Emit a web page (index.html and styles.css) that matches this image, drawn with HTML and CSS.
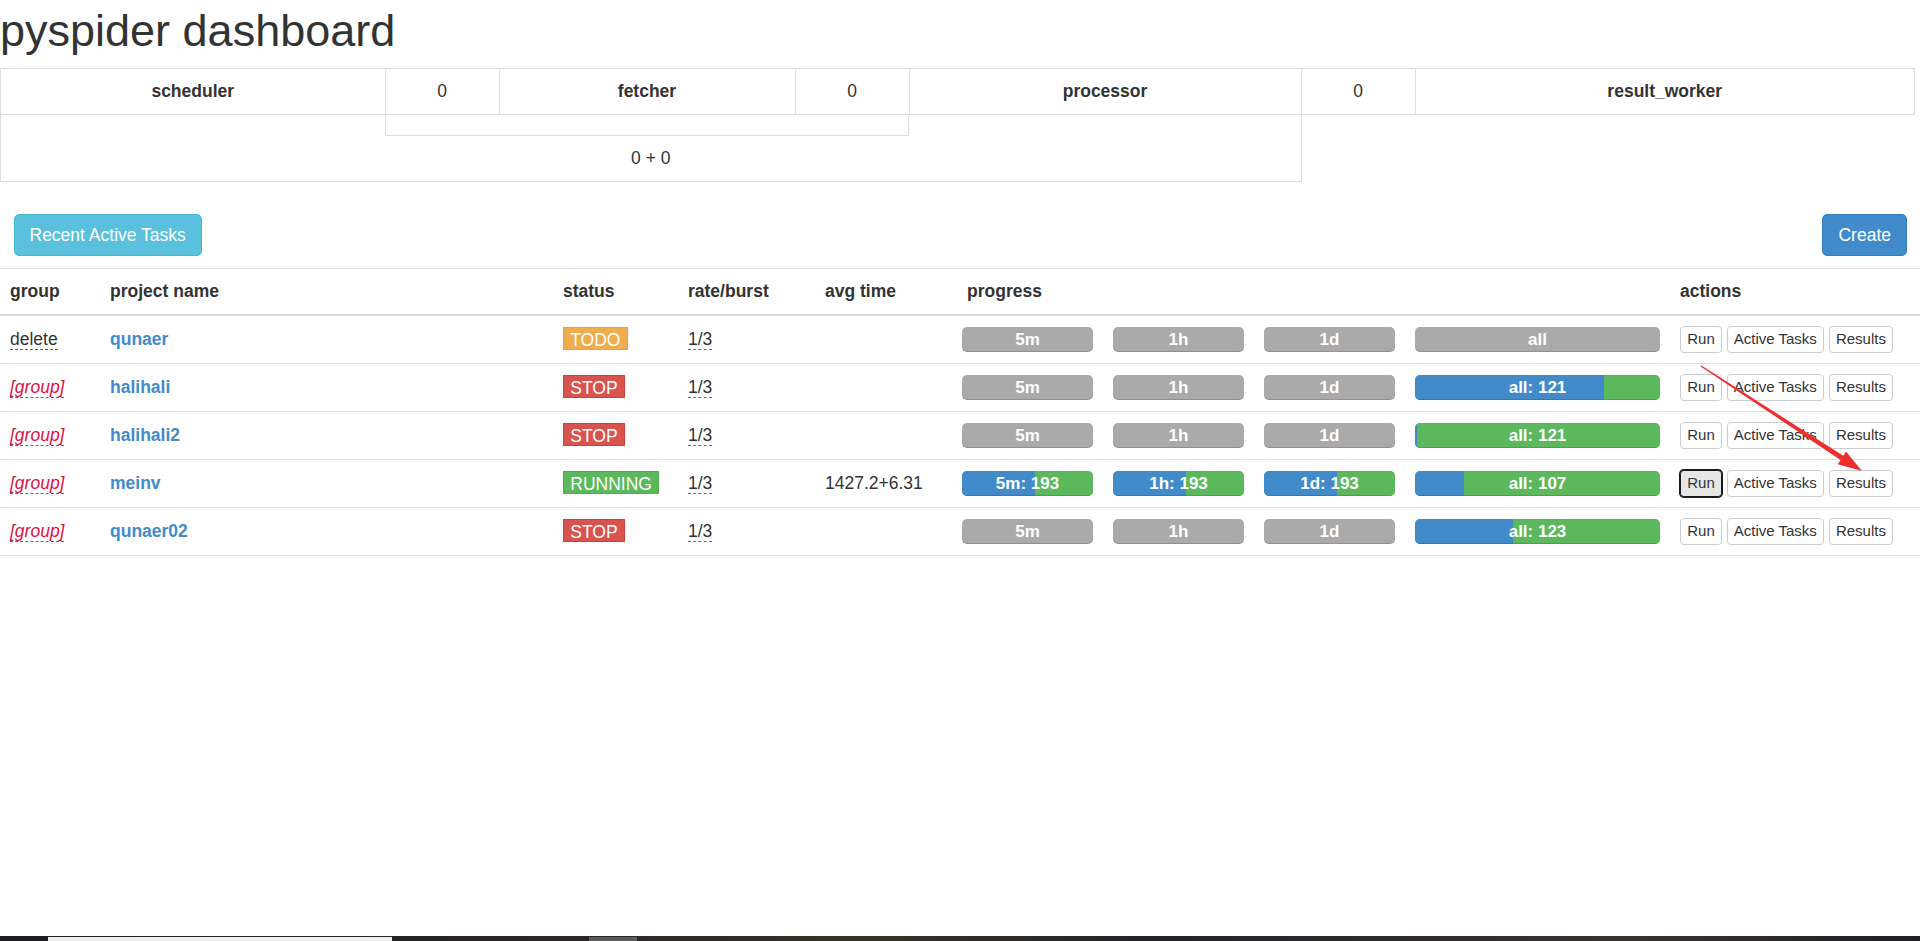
FILE: index.html
```html
<!DOCTYPE html>
<html>
<head>
<meta charset="utf-8">
<title>pyspider dashboard</title>
<link rel="stylesheet" href="styles.css">
</head>
<body>
<div class="page">
  <header><h1>pyspider dashboard</h1></header>

  <section class="queue-info">
    <table class="qtable">
      <colgroup>
        <col class="q-sched"><col class="q-val"><col class="q-fetch"><col class="q-val"><col class="q-proc"><col class="q-val"><col class="q-result">
      </colgroup>
      <tr>
        <th>scheduler</th><td>0</td><th>fetcher</th><td>0</td><th>processor</th><td>0</td><th>result_worker</th>
      </tr>
      <tr>
        <td colspan="5" class="q-bottom"><div class="q-box"></div><div class="q-sum">0 + 0</div></td>
      </tr>
    </table>
  </section>

  <div class="toolbar">
    <button class="btn btn-info">Recent Active Tasks</button>
    <button class="btn btn-primary">Create</button>
  </div>

  <table class="projects">
    <colgroup>
      <col class="p-group"><col class="p-name"><col class="p-status"><col class="p-rate"><col class="p-time"><col class="p-progress"><col class="p-actions">
    </colgroup>
    <thead>
      <tr><th>group</th><th>project name</th><th>status</th><th>rate/burst</th><th>avg time</th><th>progress</th><th>actions</th></tr>
    </thead>
    <tbody>
      <tr>
        <td><span class="editable">delete</span></td>
        <td><span class="project-name">qunaer</span></td>
        <td><span class="status status-todo">TODO</span></td>
        <td><span class="editable">1/3</span></td>
        <td></td>
        <td class="progress-cell"><div class="bars">
          <div class="bar"><div class="bar-text">5m</div></div>
          <div class="bar"><div class="bar-text">1h</div></div>
          <div class="bar"><div class="bar-text">1d</div></div>
          <div class="bar"><div class="bar-text">all</div></div>
        </div></td>
        <td><div class="actions"><button class="btn-xs">Run</button><button class="btn-xs">Active Tasks</button><button class="btn-xs">Results</button></div></td>
      </tr>
      <tr>
        <td><span class="editable editable-empty">[group]</span></td>
        <td><span class="project-name">halihali</span></td>
        <td><span class="status status-stop">STOP</span></td>
        <td><span class="editable">1/3</span></td>
        <td></td>
        <td class="progress-cell"><div class="bars">
          <div class="bar"><div class="bar-text">5m</div></div>
          <div class="bar"><div class="bar-text">1h</div></div>
          <div class="bar"><div class="bar-text">1d</div></div>
          <div class="bar"><div class="bar-fill"><div class="seg-blue" style="width:77%"></div><div class="seg-green"></div></div><div class="bar-text">all: 121</div></div>
        </div></td>
        <td><div class="actions"><button class="btn-xs">Run</button><button class="btn-xs">Active Tasks</button><button class="btn-xs">Results</button></div></td>
      </tr>
      <tr>
        <td><span class="editable editable-empty">[group]</span></td>
        <td><span class="project-name">halihali2</span></td>
        <td><span class="status status-stop">STOP</span></td>
        <td><span class="editable">1/3</span></td>
        <td></td>
        <td class="progress-cell"><div class="bars">
          <div class="bar"><div class="bar-text">5m</div></div>
          <div class="bar"><div class="bar-text">1h</div></div>
          <div class="bar"><div class="bar-text">1d</div></div>
          <div class="bar"><div class="bar-fill"><div class="seg-blue" style="width:1%"></div><div class="seg-green"></div></div><div class="bar-text">all: 121</div></div>
        </div></td>
        <td><div class="actions"><button class="btn-xs">Run</button><button class="btn-xs">Active Tasks</button><button class="btn-xs">Results</button></div></td>
      </tr>
      <tr>
        <td><span class="editable editable-empty">[group]</span></td>
        <td><span class="project-name">meinv</span></td>
        <td><span class="status status-running">RUNNING</span></td>
        <td><span class="editable">1/3</span></td>
        <td>1427.2+6.31</td>
        <td class="progress-cell"><div class="bars">
          <div class="bar"><div class="bar-fill"><div class="seg-blue" style="width:56%"></div><div class="seg-green"></div></div><div class="bar-text">5m: 193</div></div>
          <div class="bar"><div class="bar-fill"><div class="seg-blue" style="width:56%"></div><div class="seg-green"></div></div><div class="bar-text">1h: 193</div></div>
          <div class="bar"><div class="bar-fill"><div class="seg-blue" style="width:56%"></div><div class="seg-green"></div></div><div class="bar-text">1d: 193</div></div>
          <div class="bar"><div class="bar-fill"><div class="seg-blue" style="width:20%"></div><div class="seg-green"></div></div><div class="bar-text">all: 107</div></div>
        </div></td>
        <td><div class="actions"><button class="btn-xs btn-focus">Run</button><button class="btn-xs">Active Tasks</button><button class="btn-xs">Results</button></div></td>
      </tr>
      <tr>
        <td><span class="editable editable-empty">[group]</span></td>
        <td><span class="project-name">qunaer02</span></td>
        <td><span class="status status-stop">STOP</span></td>
        <td><span class="editable">1/3</span></td>
        <td></td>
        <td class="progress-cell"><div class="bars">
          <div class="bar"><div class="bar-text">5m</div></div>
          <div class="bar"><div class="bar-text">1h</div></div>
          <div class="bar"><div class="bar-text">1d</div></div>
          <div class="bar"><div class="bar-fill"><div class="seg-blue" style="width:40%"></div><div class="seg-green"></div></div><div class="bar-text">all: 123</div></div>
        </div></td>
        <td><div class="actions"><button class="btn-xs">Run</button><button class="btn-xs">Active Tasks</button><button class="btn-xs">Results</button></div></td>
      </tr>
    </tbody>
  </table>
</div>

<div class="taskbar"><div class="tb-app"></div><div class="tb-gap"></div><div class="tb-block"></div></div>

<svg class="arrow" width="175" height="115" viewBox="0 0 175 115">
  <polygon points="6.4,3.4 148.3,93.8 151,89.6 167,109 142.8,102.2 145.5,98 5.6,4.6" fill="#ee2f2f"/>
</svg>
</body>
</html>
```

FILE: styles.css
```css
* { box-sizing: border-box; }
html, body { margin: 0; padding: 0; }
body {
  font-family: "Liberation Sans", Arial, sans-serif;
  font-size: 17.5px;
  line-height: 1.42857;
  color: #333;
  background: #fff;
  min-height: 100vh;
  display: flex;
  flex-direction: column;
  position: relative;
}
.page { flex: 1 0 auto; }

h1 {
  font-size: 45px;
  font-weight: 500;
  line-height: 1.1;
  margin: 6px 0 12.5px;
}

/* queue info */
.qtable {
  width: 1914px;
  table-layout: fixed;
  border-collapse: collapse;
  margin-bottom: 25px;
}
.qtable th, .qtable td {
  border: 1px solid #ddd;
  padding: 10px;
  text-align: center;
  vertical-align: top;
  line-height: 25px;
}
.qtable th { font-weight: bold; }
.q-sched { width: 384.5px; }
.q-val { width: 114px; }
.q-fetch { width: 296px; }
.q-proc { width: 392px; }
.q-result { width: 499.5px; }
.qtable td.q-bottom { padding: 0; }
.q-box {
  margin-left: 384px;
  width: 524px;
  height: 21px;
  border: 1px solid #ddd;
  border-top: 0;
}
.q-sum { padding: 10px; }

/* toolbar */
.toolbar {
  display: flex;
  justify-content: space-between;
  padding: 7px 13px 12px 13.5px;
}
.btn {
  font-family: inherit;
  font-size: 17.5px;
  line-height: 25px;
  padding: 7.5px 15px;
  border: 1px solid transparent;
  border-radius: 5px;
  color: #fff;
  cursor: pointer;
}
.btn-info { background: #5bc0de; border-color: #46b8da; }
.btn-primary { background: #428bca; border-color: #357ebd; }

/* projects */
.projects {
  width: 100%;
  table-layout: fixed;
  border-collapse: collapse;
  border-top: 1px solid #ddd;
  border-bottom: 1px solid #ddd;
}
.p-group { width: 100px; }
.p-name { width: 453px; }
.p-status { width: 125px; }
.p-rate { width: 137px; }
.p-time { width: 142px; }
.p-progress { width: 713px; }
.p-actions { width: 250px; }
.projects th {
  text-align: left;
  padding: 10px;
  line-height: 25px;
  font-weight: bold;
  border-bottom: 2px solid #ddd;
}
.projects td {
  padding: 10px;
  line-height: 25px;
  vertical-align: middle;
  border-top: 1px solid #ddd;
  white-space: nowrap;
}
.projects td.progress-cell { padding-left: 5px; }

.editable { border-bottom: 1px dashed #0088cc; }
.editable-empty { color: #dd1144; font-style: italic; }
.project-name { font-weight: bold; color: #428bca; }

.status {
  border: 1px solid #666;
  padding: 1.5px 6.25px 0;
  color: #fff;
}
.status-todo { background: #f0ad4e; border-color: #eea236; }
.status-stop { background: #d9534f; border-color: #d43f3a; }
.status-running { background: #5cb85c; border-color: #4cae4c; }

.bars {
  display: grid;
  grid-template-columns: 131px 131px 131px 1fr;
  gap: 20px;
}
.bar {
  display: grid;
  height: 25px;
  border-radius: 5px;
  overflow: hidden;
  background: #aaa;
  box-shadow: inset 0 -1px 0 rgba(0, 0, 0, .15);
}
.bar > * { grid-area: 1 / 1; }
.bar-fill { display: flex; }
.seg-blue { background: #428bca; box-shadow: inset 0 -1px 0 rgba(0, 0, 0, .15); }
.seg-green { flex: 1; background: #5cb85c; box-shadow: inset 0 -1px 0 rgba(0, 0, 0, .15); }
.bar-text {
  color: #fff;
  font-weight: bold;
  font-size: 17px;
  line-height: 25px;
  text-align: center;
}

.actions { display: flex; gap: 4.5px; }
.btn-xs {
  font-family: inherit;
  font-size: 15px;
  line-height: 22.5px;
  padding: 1.25px 6.25px;
  border: 1px solid #ccc;
  border-radius: 3.75px;
  background: #fff;
  color: #333;
  cursor: pointer;
}
.btn-focus {
  background: #e6e6e6;
  border-color: #1a1a1a;
  box-shadow: 0 0 0 1px #1a1a1a;
}

/* annotation arrow */
.arrow {
  position: absolute;
  left: 1695px;
  top: 362px;
}

/* bottom taskbar strip */
.taskbar {
  height: 5px;
  display: flex;
  align-items: flex-end;
  padding-left: 48px;
  background: linear-gradient(90deg, #1d1e24 0%, #2b2629 30%, #3a3226 45%, #23242b 60%, #3a3230 85%, #1f2027 100%);
}
.tb-app { width: 344px; height: 4px; background: #efefef; }
.tb-gap { width: 197px; }
.tb-block { width: 48px; height: 4px; background: #5a5a5f; }
```
